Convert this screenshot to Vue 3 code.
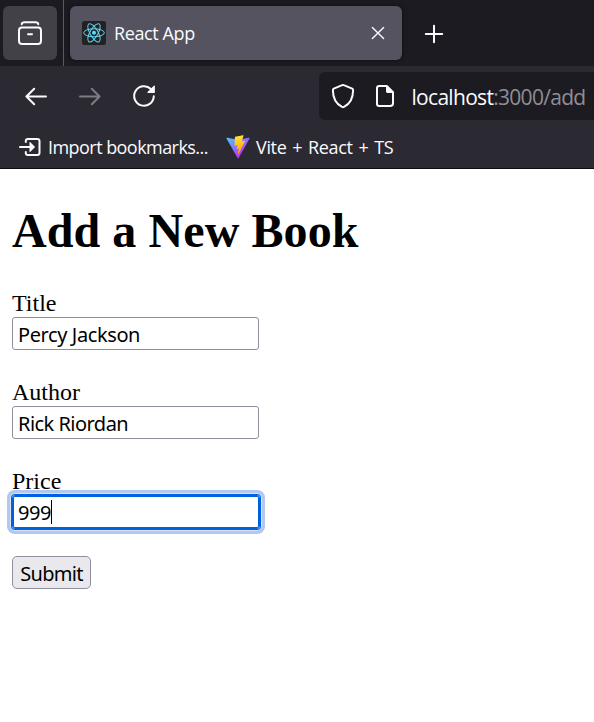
<script setup>
import { reactive } from 'vue'

const fields = reactive([
  { id: 'title', label: 'Title', value: 'Percy Jackson' },
  { id: 'author', label: 'Author', value: 'Rick Riordan' },
  { id: 'price', label: 'Price', value: '999', active: true },
])
</script>

<template>
  <div class="browser">
    <header class="tabs">
      <div class="view-button">
        <svg width="26" height="26" viewBox="0 0 26 26" fill="none" stroke="#fbfbfe" stroke-width="2" stroke-linecap="round">
          <path d="M4.7 4.2Q5 2.2 7.5 2.2H18.5Q21 2.2 21.3 4.2" />
          <rect x="2" y="7.6" width="22" height="16.4" rx="3" />
          <path d="M11 14.2H15" />
        </svg>
      </div>
      <div class="separator"></div>
      <div class="tab">
        <svg class="favicon" width="24" height="24" viewBox="0 0 24 24" fill="none" stroke="#61dafb" stroke-width="1">
          <rect width="24" height="24" rx="2.5" fill="#222" stroke="none" />
          <circle cx="12" cy="11.8" r="2" fill="#61dafb" stroke="none" />
          <ellipse cx="12" cy="11.8" rx="10.3" ry="4" />
          <ellipse cx="12" cy="11.8" rx="10.3" ry="4" transform="rotate(60 12 11.8)" />
          <ellipse cx="12" cy="11.8" rx="10.3" ry="4" transform="rotate(120 12 11.8)" />
        </svg>
        <span class="tab-title">React App</span>
        <svg class="close" width="14" height="14" viewBox="0 0 14 14" stroke="#fbfbfe" stroke-width="1.4" stroke-linecap="round">
          <path d="M1.4 1.4L12.6 12.6M12.6 1.4L1.4 12.6" />
        </svg>
      </div>
      <svg class="plus" width="20" height="20" viewBox="0 0 20 20" stroke="#fbfbfe" stroke-width="2" stroke-linecap="round">
        <path d="M10 1.8V18.2M1.8 10H18.2" />
      </svg>
    </header>

    <nav class="toolbar">
      <div class="controls">
        <svg width="24" height="24" viewBox="0 0 24 24" fill="none" stroke="#fbfbfe" stroke-width="2" stroke-linecap="round" stroke-linejoin="round">
          <path d="M22 12.5H2.6M10.2 4.7L2.4 12.5L10.2 20.3" />
        </svg>
        <svg class="forward" width="24" height="24" viewBox="0 0 24 24" fill="none" stroke="#7d7c83" stroke-width="2" stroke-linecap="round" stroke-linejoin="round">
          <path d="M2 12.5H21.4M13.8 4.7L21.6 12.5L13.8 20.3" />
        </svg>
        <svg class="reload" width="24" height="24" viewBox="0 0 24 24" fill="none">
          <path d="M21.8 12.3A9.8 9.8 0 1 1 18.9 5" stroke="#fbfbfe" stroke-width="2" stroke-linecap="round" />
          <path d="M22.9 2V8.3Q22.9 9 22.2 9H15.8Q14.9 8.8 15.5 8.1L21.8 1.7Q22.7 1.1 22.9 2Z" fill="#fbfbfe" />
        </svg>
      </div>
      <div class="address">
        <svg width="24" height="26" viewBox="0 0 24 26" fill="none" stroke="#fbfbfe" stroke-width="2" stroke-linejoin="round">
          <path d="M11.2 2.2Q12 1.8 12.8 2.2L21.2 5.7Q22.2 6.2 22.1 7.3C22.1 14.5 19.5 20.6 13 23.9Q12 24.4 11 23.9C4.5 20.6 1.9 14.5 1.9 7.3Q1.8 6.2 2.8 5.7Z" />
        </svg>
        <svg class="page-icon" width="20" height="24" viewBox="0 0 20 24" fill="none">
          <path d="M4.2 2H11.8L18 8.2V19.2Q18 22 15.2 22H4.2Q2 22 2 19.8V4.2Q2 2 4.2 2Z" stroke="#fbfbfe" stroke-width="2" stroke-linejoin="round" />
          <path d="M11 2H12.4L18.4 8V9H12.4Q11 9 11 7.6Z" fill="#fbfbfe" />
        </svg>
        <span class="url">localhost<span class="path">:3000/add</span></span>
      </div>
    </nav>

    <div class="bookmarks">
      <svg width="24" height="20" viewBox="0 0 24 20" fill="none">
        <path d="M7.8 5V4Q7.8 2 9.8 2H19.3Q21.5 2 21.5 4.2V15.8Q21.5 18 19.3 18H9.8Q7.8 18 7.8 16V15" stroke="#fbfbfe" stroke-width="2" stroke-linecap="round" />
        <path d="M2 10H12" stroke="#fbfbfe" stroke-width="2" stroke-linecap="round" />
        <path d="M11.5 5.5Q11.7 4.7 12.4 5.3L16.6 9.4Q17.1 10 16.6 10.6L12.4 14.7Q11.7 15.3 11.5 14.5Z" fill="#fbfbfe" />
      </svg>
      <span class="import">Import bookmarks...</span>
      <svg class="vite" width="24" height="24" viewBox="0 0 410 404">
        <defs>
          <linearGradient id="vite-body" x1="6" y1="33" x2="235" y2="344" gradientUnits="userSpaceOnUse">
            <stop stop-color="#41d1ff" /><stop offset="1" stop-color="#bd34fe" />
          </linearGradient>
          <linearGradient id="vite-bolt" x1="194" y1="9" x2="236" y2="293" gradientUnits="userSpaceOnUse">
            <stop stop-color="#ffea83" /><stop offset="0.083" stop-color="#ffdd35" /><stop offset="1" stop-color="#ffa800" />
          </linearGradient>
        </defs>
        <path fill="url(#vite-body)" d="M399.6 59.5L215.6 388.5C211.8 395.3 202.1 395.4 198.2 388.6L10.6 59.6C6.3 52.1 12.7 43 21.2 44.5L205.3 77.4C206.5 77.6 207.7 77.6 208.9 77.4L389.1 44.5C397.6 43 404 52 399.6 59.5Z" />
        <path fill="url(#vite-bolt)" d="M293 1.6L156.8 28.3C154.6 28.7 153 30.6 152.8 32.9L144.4 174.4C144.2 177.7 147.3 180.3 150.5 179.5L188.5 170.8C192 170 195.2 173.1 194.5 176.7L183.2 231.9C182.5 235.6 186 238.8 189.6 237.7L213 230.6C216.7 229.5 220.2 232.7 219.4 236.4L201.5 323.2C200.3 328.6 207.6 331.6 210.6 326.9L323.8 103.3C325.9 99.3 322.5 94.9 318.1 95.7L279.1 103.2C275.5 103.9 272.3 100.5 273.4 97L298.8 8.7C299.9 5.1 296.7 .9 293 1.6Z" />
      </svg>
      <span class="vite-label">Vite + React + TS</span>
    </div>

    <main class="page">
      <h1>Add a New Book</h1>
      <form @submit.prevent>
        <div v-for="field in fields" :key="field.id" class="field">
          <label :for="field.id">{{ field.label }}</label>
          <div class="input" :class="[field.id, { active: field.active }]">
            <span>{{ field.value }}</span><i v-if="field.active" class="caret"></i>
          </div>
        </div>
        <button type="submit">Submit</button>
      </form>
    </main>
  </div>
</template>

<style>
body { background: #fff; }
</style>

<style scoped>
.browser { width: 594px; height: 722px; overflow: hidden; background: #fff; color: #fbfbfe; font-family: "Open Sans", "Noto Sans", sans-serif; }
svg { display: block; flex: none; }
.tabs { height: 66px; display: flex; align-items: center; background: #1c1b22; padding-left: 3px; box-sizing: border-box; }
.view-button { width: 54px; height: 54px; border-radius: 6px; background: #42414a; display: flex; align-items: center; justify-content: center; }
.separator { width: 1px; height: 66px; margin: 0 6px; background: #5b5a63; }
.tab { width: 332px; height: 54px; border-radius: 6px; box-sizing: border-box; padding: 0 17px 0 12px; display: flex; align-items: center; background: #55535f; box-shadow: 0 0 5px rgba(0,0,0,.45); }
.tab-title { margin-left: 8px; font-size: 18px; letter-spacing: -.4px; line-height: 24px; white-space: nowrap; }
.close { margin-left: auto; }
.plus { margin: 2px 0 0 22px; }
.toolbar { height: 60px; background: #2b2a33; display: flex; align-items: center; justify-content: space-between; padding-left: 24px; box-sizing: border-box; }
.controls { display: flex; align-items: center; }
.forward { margin-left: 30px; }
.reload { margin-left: 30px; }
.address { width: 275px; height: 48px; box-sizing: border-box; background: #1c1b22; border-radius: 6px 0 0 6px; display: flex; align-items: center; padding-left: 12px; }
.page-icon { margin-left: 20px; }
.url { margin: 2px 0 0 16.5px; font-size: 21px; letter-spacing: -.7px; line-height: 28px; white-space: nowrap; }
.path { color: #8f8e94; }
.bookmarks { height: 43px; border-bottom: 1px solid #0c0c0d; box-sizing: border-box; display: flex; align-items: center; padding-left: 18px; background: #2b2a33; font-size: 18px; line-height: 24px; white-space: nowrap; }
.import { width: 161px; margin-left: 6px; letter-spacing: -.55px; }
.vite { margin-left: 17px; }
.vite-label { margin-left: 6px; letter-spacing: -.34px; word-spacing: 1.5px; }
.page { padding: 34px 12px 0; color: #000; font-family: "Liberation Serif", serif; font-size: 24px; }
h1 { margin: 0 0 32px; font-size: 48px; line-height: 55px; font-weight: 700; letter-spacing: .08px; }
.field { height: 89px; }
label { display: block; height: 27px; line-height: 27px; }
.input { width: 247px; height: 33px; box-sizing: border-box; border: 1px solid #8f8f9d; border-radius: 3px; padding: 2px 5px 0; display: flex; align-items: center; font: 20px/28px "Noto Sans", sans-serif; letter-spacing: -.4px; }
.author { letter-spacing: -.53px; }
.input.active { width: 248px; height: 34px; padding-top: 1px; border-color: #0061e0; box-shadow: 0 0 0 1px #0061e0, inset 0 0 0 1px #0061e0, 0 0 0 1.5px #fff, 0 0 0 5px #b2c9ef; }
.caret { width: 1px; height: 24px; margin-top: -2px; background: #000; }
button { display: block; width: 79px; height: 33px; margin: -1px 0 0; padding: 2px 0 0; box-sizing: border-box; border: 1px solid #8f8f9d; border-radius: 5px; background: #e9e9ed; color: #000; font: 20px/28px "Noto Sans", sans-serif; letter-spacing: -.7px; }
</style>
